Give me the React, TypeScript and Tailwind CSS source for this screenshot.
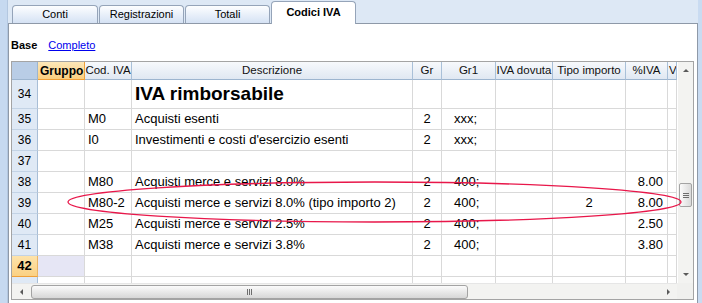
import React from "react";

const W = [
  "w-[26px]",
  "w-[47px]",
  "w-[47px]",
  "w-[281px]",
  "w-[29px]",
  "w-[54px]",
  "w-[57px]",
  "w-[73px]",
  "w-[42px]",
  "w-[9px]",
];

const ALIGN = [
  "justify-center",
  "pl-[3px]",
  "pl-[3px]",
  "pl-[3px]",
  "justify-center",
  "pl-[12px]",
  "justify-center",
  "justify-center",
  "justify-end pr-[4px]",
  "pl-[1px]",
];

type RowData = {
  n: string;
  cells: string[];
  tall?: boolean;
  current?: boolean;
};

const rows: RowData[] = [
  { n: "34", cells: ["", "", "IVA rimborsabile", "", "", "", "", "", ""], tall: true },
  { n: "35", cells: ["", "M0", "Acquisti esenti", "2", "xxx;", "", "", "", ""] },
  { n: "36", cells: ["", "I0", "Investimenti e costi d'esercizio esenti", "2", "xxx;", "", "", "", ""] },
  { n: "37", cells: ["", "", "", "", "", "", "", "", ""] },
  { n: "38", cells: ["", "M80", "Acquisti merce e servizi 8.0%", "2", "400;", "", "", "8.00", ""] },
  { n: "39", cells: ["", "M80-2", "Acquisti merce e servizi 8.0% (tipo importo 2)", "2", "400;", "", "2", "8.00", ""] },
  { n: "40", cells: ["", "M25", "Acquisti merce e servizi 2.5%", "2", "400;", "", "", "2.50", ""] },
  { n: "41", cells: ["", "M38", "Acquisti merce e servizi 3.8%", "2", "400;", "", "", "3.80", ""] },
  { n: "42", cells: ["", "", "", "", "", "", "", "", ""], current: true },
];

const headers = ["Gruppo", "Cod. IVA", "Descrizione", "Gr", "Gr1", "IVA dovuta", "Tipo importo", "%IVA", "V."];

function HeaderRow() {
  return (
    <div className="flex h-[18px] shrink-0">
      <div className={`${W[0]} shrink-0 h-full bg-[#b9cde6] border-r border-b border-[#9db5cf]`} />
      {headers.map((h, i) => {
        const idx = i + 1;
        if (idx === 1) {
          return (
            <div
              key={h}
              className={`${W[idx]} shrink-0 h-full bg-gradient-to-b from-[#fde7b8] to-[#fbcf7f] border-r border-b border-[#f0a038] flex items-center pl-[2px] font-bold text-[12px] text-black overflow-hidden whitespace-nowrap`}
            >
              {h}
            </div>
          );
        }
        return (
          <div
            key={h}
            className={`${W[idx]} shrink-0 h-full bg-gradient-to-b from-[#f7f9fc] to-[#e0e8f2] border-r border-b border-r-[#a9c0d8] border-b-[#9db5cf] text-[11.5px] leading-[17px] text-[#111] overflow-hidden whitespace-nowrap ${
              idx === 9 ? "text-left pl-[1px]" : "text-center"
            }`}
          >
            {h}
          </div>
        );
      })}
    </div>
  );
}

function DataRow({ r }: { r: RowData }) {
  return (
    <div className={`flex shrink-0 ${r.tall ? "h-[29px]" : "h-[21px]"}`}>
      <div
        className={`${W[0]} shrink-0 h-full flex items-center justify-center border-r border-b ${
          r.current
            ? "bg-gradient-to-b from-[#fde3aa] to-[#fbd183] border-r-[#e9b566] border-b-[#f0a038] font-bold text-[13px]"
            : "bg-[#dfe9f5] border-r-[#a8bed6] border-b-[#c3d3e5] text-[12px]"
        } text-black`}
      >
        {r.n}
      </div>
      {r.cells.map((c, i) => {
        const idx = i + 1;
        const isTitle = r.tall && idx === 3;
        return (
          <div
            key={idx}
            className={`${W[idx]} shrink-0 h-full flex items-center overflow-hidden whitespace-nowrap border-r border-b border-[#d9d9d9] ${ALIGN[idx]} ${
              r.current && idx === 1 ? "bg-[#e6e6f5]" : "bg-white"
            } ${isTitle ? "text-[19px] font-bold" : "text-[13px]"} text-black`}
          >
            {c}
          </div>
        );
      })}
    </div>
  );
}

function EmptyTail() {
  return (
    <div className="flex flex-1 min-h-0">
      <div className={`${W[0]} shrink-0 h-full bg-[#dfe9f5] border-r border-[#a8bed6]`} />
      {W.slice(1).map((w, i) => (
        <div key={i} className={`${w} shrink-0 h-full border-r border-[#d9d9d9]`} />
      ))}
    </div>
  );
}

function VScroll() {
  return (
    <div className="w-[16px] shrink-0 h-full flex flex-col bg-[#f3f3f1] border-l border-[#ffffff]">
      <div className="h-[17px] shrink-0 flex items-center justify-center">
        <div className="w-0 h-0 border-x-[3px] border-x-transparent border-b-[3px] border-b-[#5a5a5a]" />
      </div>
      <div className="h-[104px] shrink-0" />
      <div className="h-[24px] shrink-0 mx-[1px] rounded-[2px] border border-[#a3a3a3] bg-gradient-to-r from-[#fbfbfb] to-[#dadada] flex flex-col items-center justify-center gap-[1px]">
        <div className="w-[6px] h-px bg-[#6d6d6d]" />
        <div className="w-[6px] h-px bg-[#6d6d6d]" />
        <div className="w-[6px] h-px bg-[#6d6d6d]" />
      </div>
      <div className="flex-1" />
      <div className="h-[17px] shrink-0 flex items-center justify-center">
        <div className="w-0 h-0 border-x-[3px] border-x-transparent border-t-[3px] border-t-[#5a5a5a]" />
      </div>
    </div>
  );
}

function HScroll() {
  return (
    <div className="flex h-[16px] shrink-0">
      <div className="w-[665px] shrink-0 h-full flex items-center bg-[#f3f3f1] border-t border-[#e6e6e6]">
        <div className="w-[19px] shrink-0 h-full flex items-center justify-center">
          <div className="w-0 h-0 border-y-[3px] border-y-transparent border-r-[3px] border-r-[#5a5a5a]" />
        </div>
        <div className="w-[437px] shrink-0 h-[14px] rounded-[3px] border border-[#a3a3a3] bg-gradient-to-b from-[#fbfbfb] to-[#d7d7d7] flex items-center justify-center gap-[1px]">
          <div className="w-px h-[6px] bg-[#6d6d6d]" />
          <div className="w-px h-[6px] bg-[#6d6d6d]" />
          <div className="w-px h-[6px] bg-[#6d6d6d]" />
        </div>
        <div className="flex-1" />
        <div className="w-[17px] shrink-0 h-full flex items-center justify-center">
          <div className="w-0 h-0 border-y-[3px] border-y-transparent border-l-[3px] border-l-[#5a5a5a]" />
        </div>
      </div>
      <div className="w-[16px] shrink-0 h-full bg-[#f0f0ee]" />
    </div>
  );
}

export default function App() {
  const tabBase =
    "shrink-0 rounded-t-[4px] border border-b-0 border-[#95a4b9] flex items-center justify-center text-[11px] text-black";
  return (
    <div className="relative w-[702px] h-[303px] overflow-hidden flex bg-[#dde8f5] font-['Liberation_Sans',Arial,sans-serif]">
      <div className="w-[8px] shrink-0 h-full bg-[#c6d9f0] border-r border-[#b3c7e0]" />
      <div className="w-[690px] shrink-0 h-full flex flex-col">
        <div className="h-[24px] shrink-0 flex items-end pl-[4px] gap-[1px] border-b border-[#8e99a8]">
          <div className={`${tabBase} w-[86px] h-[18px] bg-gradient-to-b from-[#fdfeff] to-[#d5e2f4]`}>Conti</div>
          <div className={`${tabBase} w-[85px] h-[18px] bg-gradient-to-b from-[#fdfeff] to-[#d5e2f4]`}>Registrazioni</div>
          <div className={`${tabBase} w-[85px] h-[18px] bg-gradient-to-b from-[#fdfeff] to-[#d5e2f4]`}>Totali</div>
          <div className={`${tabBase} relative z-10 w-[85px] h-[23px] -mb-px bg-white font-bold pb-[1px]`}>Codici IVA</div>
        </div>
        <div className="flex-1 min-h-0 bg-white border-x border-[#8e99a8] pl-[2px] flex flex-col">
          <div className="mt-[12px] h-[18px] shrink-0 flex items-center text-[11px]">
            <span className="font-bold text-black">Base</span>
            <span className="ml-[11px] text-[#0000ee] underline">Completo</span>
          </div>
          <div className="mt-[7px] w-[683px] h-[239px] shrink-0 border border-[#a4a4a4] flex flex-col">
            <div className="flex h-[221px] shrink-0">
              <div className="w-[665px] shrink-0 h-full flex flex-col overflow-hidden">
                <HeaderRow />
                {rows.map((r) => (
                  <DataRow key={r.n} r={r} />
                ))}
                <EmptyTail />
              </div>
              <VScroll />
            </div>
            <HScroll />
          </div>
        </div>
      </div>
      <div className="w-[4px] shrink-0 h-full bg-[#c9dbf1]" />
      <svg
        className="absolute left-0 top-0 pointer-events-none"
        width="702"
        height="303"
        viewBox="0 0 702 303"
      >
        <ellipse cx="374.5" cy="202" rx="306.5" ry="20" fill="none" stroke="#e8174a" strokeWidth="1.3" />
      </svg>
    </div>
  );
}
